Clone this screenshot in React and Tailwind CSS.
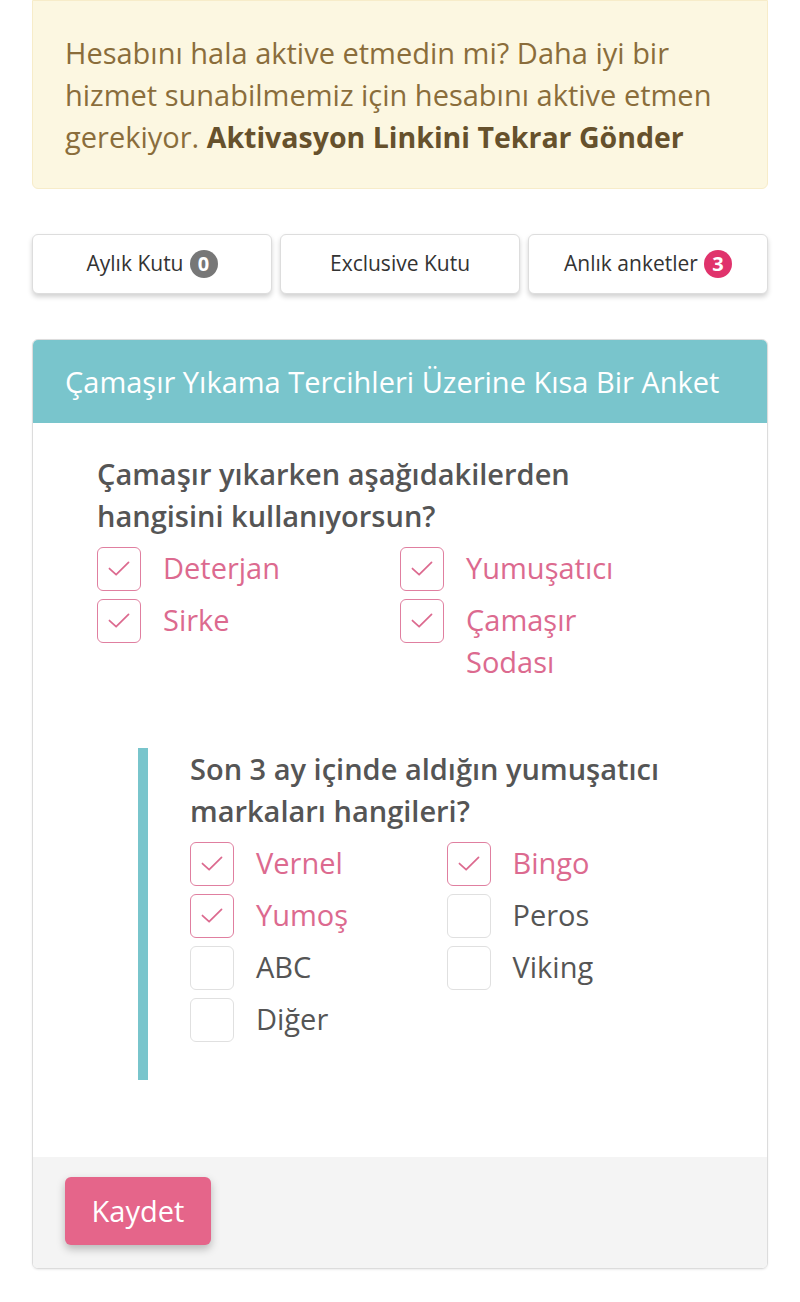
import { useState } from 'react'

// ── Survey data ───────────────────────────────────────────────────────────────
const MAIN_OPTIONS = [
  { label: 'Deterjan',        checked: true },
  { label: 'Yumuşatıcı',      checked: true },
  { label: 'Sirke',           checked: true },
  { label: 'Çamaşır Sodası',  checked: true },
]

const BRAND_OPTIONS = [
  { label: 'Vernel', checked: true },
  { label: 'Bingo',  checked: true },
  { label: 'Yumoş',  checked: true },
  { label: 'Peros',  checked: false },
  { label: 'ABC',    checked: false },
  { label: 'Viking', checked: false },
  { label: 'Diğer',  checked: false },
]

const FONT = { fontFamily: '"Open Sans", "Noto Sans", sans-serif' }

// ── Checkbox row ──────────────────────────────────────────────────────────────
function Option({ label, checked, onToggle, labelClass }) {
  return (
    <button type="button" onClick={onToggle} className="flex items-start gap-[22px] text-left">
      <span
        className={`w-[44px] h-[44px] flex-shrink-0 rounded-[6px] border-[1.5px] flex items-center justify-center ${
          checked ? 'border-[#e07fa0]' : 'border-[#e0e0e0]'
        }`}
      >
        {checked && (
          <svg width="44" height="44" viewBox="0 0 44 44" fill="none" stroke="#dc6a8f" strokeWidth="1.8" strokeLinecap="round" strokeLinejoin="round">
            <path d="M12 21.5l7 6.5 13-13" />
          </svg>
        )}
      </span>
      <span className={`text-[29px] leading-[42px] ${labelClass} ${checked ? 'text-[#dc6a8f]' : 'text-[#555]'}`}>
        {label}
      </span>
    </button>
  )
}

function OptionGrid({ items, setItems, labelClass = '' }) {
  return (
    <div className="grid grid-cols-2 gap-y-2">
      {items.map((o, i) => (
        <Option
          key={o.label}
          label={o.label}
          checked={o.checked}
          labelClass={labelClass}
          onToggle={() => setItems(items.map((x, j) => (j === i ? { ...x, checked: !x.checked } : x)))}
        />
      ))}
    </div>
  )
}

function Badge({ children, className }) {
  return (
    <span className={`inline-flex w-[28px] h-[28px] rounded-full items-center justify-center text-white text-[20px] font-bold ${className}`}>
      {children}
    </span>
  )
}

const TAB = 'h-[60px] rounded-[6px] border border-[#ddd] bg-white shadow-[0_3px_5px_rgba(0,0,0,0.18)] flex items-center justify-center gap-1.5 text-[21px] text-[#333]'

// ── Root ──────────────────────────────────────────────────────────────────────
export default function App() {
  const [main, setMain]     = useState(MAIN_OPTIONS)
  const [brands, setBrands] = useState(BRAND_OPTIONS)

  return (
    <div className="min-h-[1302px] bg-white px-8 pb-[34px]" style={FONT}>

      {/* Activation alert */}
      <div className="bg-[#fcf7e1] border border-[#f7ecc9] rounded-b-[6px] px-8 pt-[31px] pb-[30px] text-[29px] leading-[42px] text-[#8a6d3b]">
        Hesabını hala aktive etmedin mi? Daha iyi bir hizmet sunabilmemiz için hesabını aktive etmen gerekiyor.{' '}
        <span className="font-bold text-[28.5px] text-[#66512c]">Aktivasyon Linkini Tekrar Gönder</span>
      </div>

      {/* Tabs */}
      <div className="grid grid-cols-3 gap-2 mt-[45px]">
        <button className={TAB}>
          Aylık Kutu <Badge className="bg-[#777]">0</Badge>
        </button>
        <button className={TAB}>Exclusive Kutu</button>
        <button className={TAB}>
          Anlık anketler <Badge className="bg-[#e0336c]">3</Badge>
        </button>
      </div>

      {/* Survey card */}
      <div className="mt-[45px] rounded-[6px] border border-[#dcdcdc] overflow-hidden shadow-[0_1px_2px_rgba(0,0,0,0.08)]">
        <div className="bg-[#79c5cc] h-[83px] flex items-center px-8 text-white text-[29px]">
          Çamaşır Yıkama Tercihleri Üzerine Kısa Bir Anket
        </div>

        <div className="bg-white pl-16 pr-16 pt-[30px] pb-[77px]">
          <p className="text-[29px] leading-[42px] font-semibold text-[#555] mb-[10px]">
            Çamaşır yıkarken aşağıdakilerden hangisini kullanıyorsun?
          </p>
          <OptionGrid items={main} setItems={setMain} labelClass="max-w-[180px]" />

          {/* Follow-up question */}
          <div className="mt-[65px] ml-[41px] border-l-[10px] border-[#79c5cc] pl-[42px] pb-[38px]">
            <p className="text-[29px] leading-[42px] font-semibold text-[#555] mb-[10px]">
              Son 3 ay içinde aldığın yumuşatıcı markaları hangileri?
            </p>
            <OptionGrid items={brands} setItems={setBrands} />
          </div>
        </div>

        <div className="bg-[#f4f4f4] px-8 pt-5 pb-[23px]">
          <button className="h-[68px] w-[146px] rounded-[6px] bg-[#e5658a] text-white text-[29px] shadow-[0_4px_8px_rgba(0,0,0,0.25)]">
            Kaydet
          </button>
        </div>
      </div>
    </div>
  )
}
